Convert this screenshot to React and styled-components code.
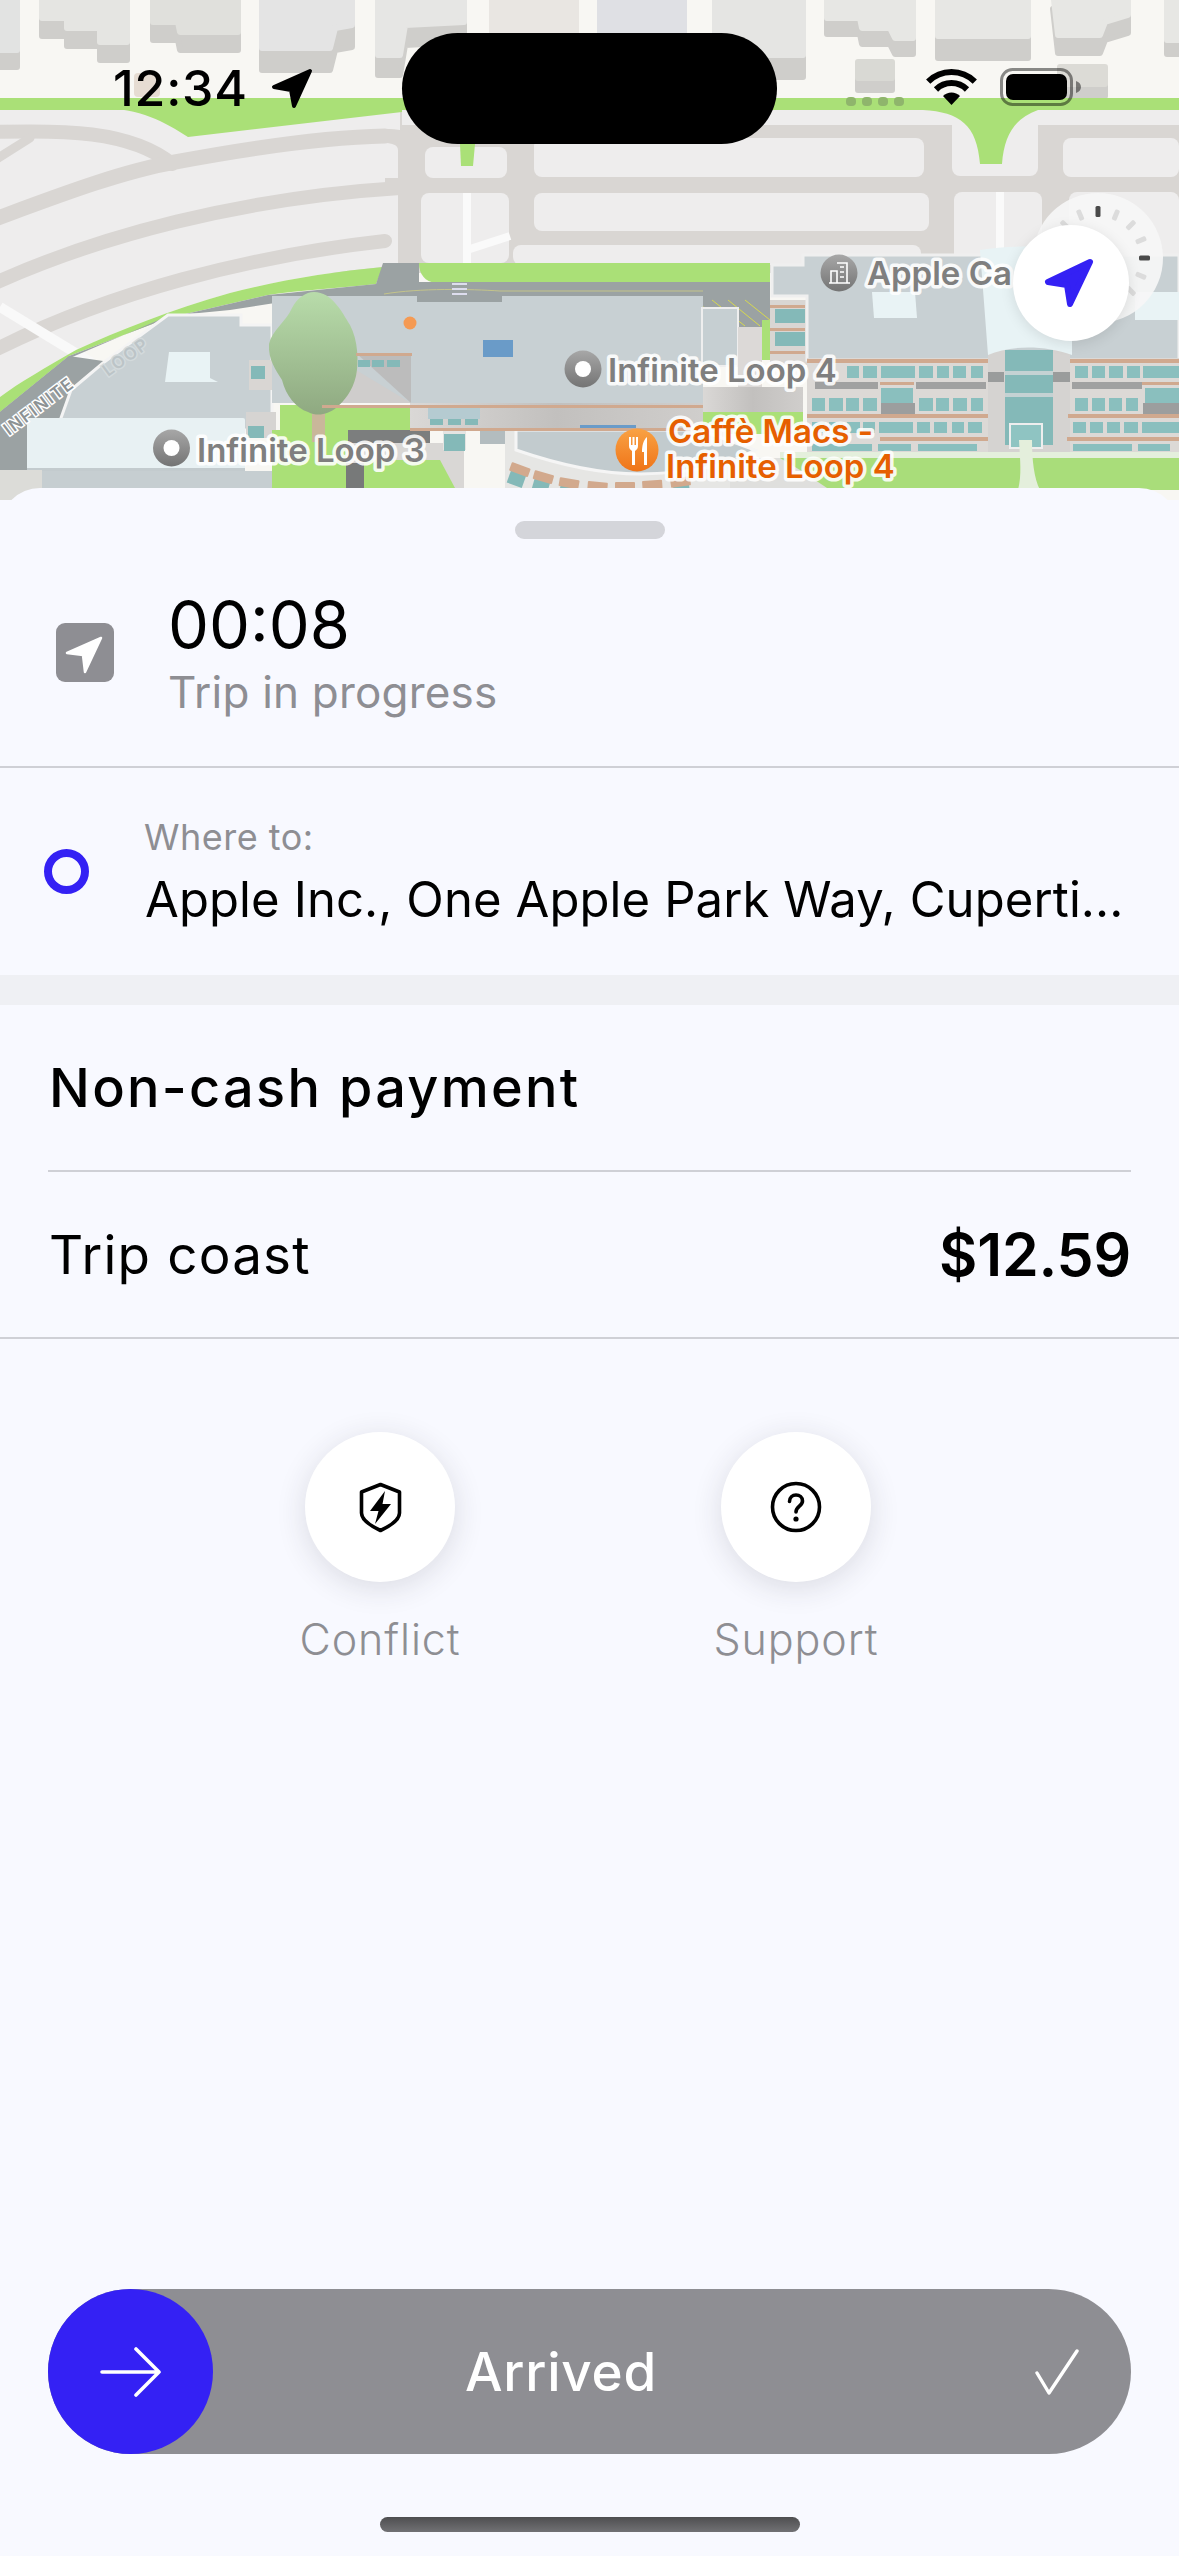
import styled, { createGlobalStyle } from "styled-components";

const BLUE = "#3421f4";
const GRAY = "#8e8e93";
const FONT = `Inter, "Liberation Sans", sans-serif`;

const GlobalStyle = createGlobalStyle`
  html, body { margin: 0; padding: 0; background: #f8f9ff; }
  * { box-sizing: border-box; }
  body { font-family: ${FONT}; -webkit-font-smoothing: antialiased; }
`;

const Page = styled.div`
  width: 1179px;
  height: 2556px;
  display: flex;
  flex-direction: column;
  overflow: hidden;
  background: #f8f9ff;
`;

// map + things floating on it
const MapWrap = styled.div`
  position: relative;
  flex: 0 0 500px;
  height: 500px;
  overflow: hidden;
`;
const MapSvg = styled.svg`
  display: block;
  width: 1179px;
  height: 500px;
`;
const MapLabel = styled.text`
  font-family: ${FONT};
  font-size: 33px;
  font-weight: 600;
  fill: ${({ $orange }) => ($orange ? "#e65f00" : "#7f7f7f")};
  stroke: rgba(255, 255, 255, 0.88);
  stroke-width: 7px;
  stroke-linejoin: round;
  paint-order: stroke;
`;
const RoadName = styled.text`
  font-family: ${FONT};
  font-size: 17px;
  font-weight: 600;
  letter-spacing: 1.5px;
  fill: ${({ $faint }) => ($faint ? "#bcc4c7" : "#8c9294")};
  stroke: ${({ $faint }) => ($faint ? "#d3dadc" : "#fff")};
  stroke-width: 3px;
  paint-order: stroke;
`;

const StatusBar = styled.div`
  position: absolute;
  inset: 0 0 auto 0;
  height: 144px;
`;
const Clock = styled.div`
  position: absolute;
  left: 113px;
  top: 59px;
  font-size: 50px;
  line-height: 58px;
  font-weight: 500;
  letter-spacing: 0.8px;
  color: #000;
`;
const StatusIcon = styled.svg`
  position: absolute;
  left: ${({ $x }) => $x}px;
  top: ${({ $y }) => $y}px;
`;
const Island = styled.div`
  position: absolute;
  left: 402px;
  top: 33px;
  width: 375px;
  height: 111px;
  border-radius: 56px;
  background: #000;
`;
const CompassDial = styled.svg`
  position: absolute;
  left: 1033px;
  top: 192px;
`;
const LocateButton = styled.div`
  position: absolute;
  left: 1013px;
  top: 225px;
  width: 116px;
  height: 116px;
  border-radius: 50%;
  background: #fff;
  box-shadow: 0 3px 14px rgba(0, 0, 0, 0.1);
`;

// bottom sheet
const Sheet = styled.section`
  position: relative;
  flex: 1;
  margin-top: -12px;
  display: flex;
  flex-direction: column;
  background: #f8f9ff;
  border-radius: 40px 40px 0 0;
`;
const Handle = styled.div`
  align-self: center;
  width: 150px;
  height: 18px;
  margin-top: 33px;
  border-radius: 9px;
  background: #d4d5da;
`;
const TripRow = styled.div`
  height: 229px;
  display: flex;
  align-items: center;
  gap: 54px;
  padding-left: 56px;
  border-bottom: 2px solid #cfd0d6;
`;
const NavTile = styled.div`
  width: 58px;
  height: 59px;
  display: flex;
  border-radius: 9px;
  background: ${GRAY};
`;
const Stack = styled.div`
  display: flex;
  flex-direction: column;
`;
const Timer = styled.div`
  font-size: 65px;
  line-height: 78px;
  font-weight: 400;
  margin-top: -2px;
  color: #000;
`;
const TripStatus = styled.div`
  margin-top: 2px;
  font-size: 44px;
  line-height: 52px;
  letter-spacing: 0.2px;
  color: ${GRAY};
`;
const DestRow = styled.div`
  height: 207px;
  display: flex;
  align-items: center;
  gap: 56px;
  padding-left: 44px;
`;
const DestDot = styled.div`
  width: 45px;
  height: 45px;
  border-radius: 50%;
  border: 8px solid ${BLUE};
`;
const DestLabel = styled.div`
  font-size: 36px;
  line-height: 42px;
  letter-spacing: 0.5px;
  margin: 1px 0 0 -1px;
  color: ${GRAY};
`;
const DestValue = styled.div`
  margin-top: 13px;
  font-size: 49px;
  line-height: 58px;
  letter-spacing: 0.1px;
  color: #000;
  white-space: nowrap;
`;
const Band = styled.div`
  height: 30px;
  background: #eff0f4;
`;
const PayTitleRow = styled.div`
  height: 167px;
  margin: 0 48px;
  display: flex;
  align-items: center;
  border-bottom: 2px solid #cfd0d6;
`;
const PayTitle = styled.div`
  font-size: 54px;
  font-weight: 500;
  letter-spacing: 2.3px;
  margin-left: 1px;
  color: #000;
`;
const CostRow = styled.div`
  height: 167px;
  padding: 0 48px;
  display: flex;
  align-items: center;
  justify-content: space-between;
  border-bottom: 2px solid #cfd0d6;
`;
const CostLabel = styled.div`
  font-size: 53px;
  letter-spacing: 1.2px;
  margin-left: 1px;
  color: #000;
`;
const CostValue = styled.div`
  font-size: 59px;
  font-weight: 600;
  letter-spacing: -0.2px;
  color: #000;
`;
const Actions = styled.div`
  margin-top: 93px;
  padding-right: 3px;
  display: flex;
  justify-content: center;
  gap: 216px;
`;
const Action = styled.div`
  width: 200px;
  display: flex;
  flex-direction: column;
  align-items: center;
`;
const ActionCircle = styled.div`
  width: 150px;
  height: 150px;
  display: flex;
  align-items: center;
  justify-content: center;
  border-radius: 50%;
  background: #fff;
  box-shadow: 0 6px 30px rgba(40, 40, 60, 0.14);
`;
const ActionLabel = styled.div`
  margin-top: 32px;
  font-size: 43px;
  line-height: 50px;
  font-weight: 300;
  letter-spacing: 0.9px;
  color: ${GRAY};
`;
const Slider = styled.div`
  margin: auto 48px 0;
  height: 165px;
  display: flex;
  align-items: center;
  border-radius: 83px;
  background: ${GRAY};
`;
const Knob = styled.div`
  width: 165px;
  height: 165px;
  flex: none;
  display: flex;
  align-items: center;
  justify-content: center;
  border-radius: 50%;
  background: ${BLUE};
`;
const SliderText = styled.div`
  flex: 1;
  text-align: center;
  padding-right: 126px;
  font-size: 53px;
  font-weight: 500;
  letter-spacing: 0.8px;
  color: #fff;
`;
const SliderCheck = styled.svg`
  flex: none;
  margin-right: 52px;
`;
const HomeBar = styled.div`
  align-self: center;
  width: 420px;
  height: 15px;
  margin: 63px 0 24px;
  border-radius: 8px;
  background: linear-gradient(#4e4e50, #717174);
`;

// rooftops along the top edge: [points of the top face, depth of the side wall]
const topBlocks = [
  ["-10,-9 17,-9 17,50 -10,50", 17, "#e2e3e2"],
  ["42,-9 127,-9 127,42 100,42 100,28 67,28 67,18 42,18", 18, "#e5e5e2"],
  ["153,-9 238,-9 238,32 180,32 178,22 153,22", 18, "#e0e0dc"],
  ["262,-9 352,-9 352,25 335,28 330,48 262,48", 22, "#e4e4e4"],
  ["378,-9 464,-9 464,22 405,25 400,55 378,55", 20, "#e6e6e4"],
  ["492,-9 576,-9 576,40 492,40", 10, "#e9e6e2"],
  ["600,-9 684,-9 684,40 600,40", 10, "#dfe0e4"],
  ["715,-9 803,-9 803,55 715,55", 22, "#e5e5e3"],
  ["827,-9 913,-9 913,38 895,38 890,28 862,28 860,18 827,18", 16, "#e7e7e4"],
  ["938,-9 1028,-9 1028,36 938,36", 22, "#e7e7e4"],
  ["1053,-9 1128,-9 1128,15 1105,22 1100,35 1058,35", 18, "#e7e7e4"],
  ["1167,-9 1190,-9 1190,40 1167,40", 14, "#e7e7e4"],
  ["858,62 892,62 892,78 858,78", 12, "#d9d9d4"],
  ["1060,67 1105,67 1105,84 1060,84", 12, "#dcdbd6"],
];

const lightBlocks = [
  [425, 147, 82, 31],
  [534, 138, 390, 39],
  [421, 193, 88, 70],
  [534, 193, 395, 38],
  [513, 245, 408, 20],
  [954, 192, 88, 70],
  [952, 110, 86, 66],
  [1063, 138, 116, 39],
  [1069, 192, 110, 70],
];

const facadeRows = [
  [366, 12, [[847, 859], [863, 877], [881, 915], [919, 933], [937, 949], [953, 966], [971, 983], [1075, 1088], [1092, 1105], [1109, 1123], [1127, 1140], [1143, 1179]]],
  [398, 13, [[812, 825], [829, 843], [846, 859], [863, 877], [919, 933], [936, 949], [953, 967], [971, 983], [1075, 1088], [1092, 1105], [1109, 1122], [1126, 1138]]],
  [388, 15, [[881, 913], [1145, 1179]]],
  [422, 11, [[812, 825], [829, 843], [847, 860], [863, 875], [879, 913], [917, 930], [934, 947], [952, 964], [968, 982], [1073, 1086], [1090, 1103], [1107, 1120], [1124, 1138], [1142, 1179]]],
  [444, 7, [[812, 872], [878, 911], [918, 977], [1073, 1132], [1138, 1170]]],
];

const peachBars = [
  [807, 359, 181, 4], [1070, 359, 109, 4],
  [880, 382, 34, 3], [1100, 382, 79, 3],
  [807, 414, 181, 4], [1068, 414, 111, 4],
  [880, 437, 108, 4], [1067, 437, 112, 4],
  [770, 305, 35, 3], [770, 328, 35, 3], [770, 351, 35, 3],
  [322, 405, 381, 3], [410, 428, 293, 3], [356, 353, 56, 3],
];

// cafe awnings: [x, y, tilt]
const awnings = [
  [512, 462, 20], [535, 470, 16], [560, 477, 10], [588, 481, 5],
  [615, 482, 0], [642, 481, -4], [670, 479, -8],
];

const dialTicks = Array.from({ length: 16 }, (_, i) => i * 22.5);

function CityMap() {
  return (
    <MapSvg viewBox="0 0 1179 500">
      <defs>
        <linearGradient id="tree" x1="0" y1="0" x2="0" y2="1">
          <stop offset="0" stopColor="#b8dcaa" />
          <stop offset="1" stopColor="#8fa981" />
        </linearGradient>
        <linearGradient id="ledge" x1="0" y1="0" x2="1" y2="0">
          <stop offset="0" stopColor="#dad8d6" />
          <stop offset="0.5" stopColor="#c2c0be" />
          <stop offset="1" stopColor="#d0cecc" />
        </linearGradient>
        <linearGradient id="pin" x1="0" y1="0" x2="0" y2="1">
          <stop offset="0" stopColor="#a7a7a7" />
          <stop offset="1" stopColor="#747474" />
        </linearGradient>
        <linearGradient id="pinOrange" x1="0" y1="0" x2="0" y2="1">
          <stop offset="0" stopColor="#f9a244" />
          <stop offset="1" stopColor="#ef7418" />
        </linearGradient>
      </defs>

      <rect width="1179" height="500" fill="#f8f7f3" />
      {topBlocks.map(([points, depth, top], i) => (
        <g key={i} strokeLinejoin="round" strokeWidth="6">
          <polygon points={points} fill="#cfcecb" stroke="#cfcecb" transform={`translate(0 ${depth})`} />
          <polygon points={points} fill={top} stroke={top} />
        </g>
      ))}
      <rect x="134" y="73" width="26" height="24" rx="4" fill="#e6dcd2" />

      {/* streets */}
      <rect y="98" width="1179" height="175" fill="#d9d6d3" />
      <rect x="402" y="110" width="777" height="15" fill="#eeeded" />
      <path d="M0 397V110H400V267H383C330 272 280 280 230 293C170 310 120 330 76 350C45 368 20 382 0 397Z" fill="#eeeded" />
      <g fill="none" stroke="#d9d6d3" strokeLinecap="round">
        <path d="M-5 132C60 130 130 130 172 164" strokeWidth="14" />
        <path d="M-5 160L30 138" strokeWidth="9" />
        <path d="M-5 219C60 195 120 172 175 162C250 148 330 137 385 136" strokeWidth="15" />
        <path d="M-5 283C100 236 240 198 400 188" strokeWidth="14" />
        <path d="M-5 350C110 292 250 256 385 241" strokeWidth="14" />
      </g>
      <path d="M0 307L92 363" stroke="#f9f9f9" strokeWidth="10" />
      <path d="M385 129C410 129 423 135 423 150V265H398V150C398 145 392 143 385 143Z" fill="#d9d6d3" />
      <rect x="385" y="178" width="794" height="14" fill="#d9d6d3" />

      {lightBlocks.map(([x, y, w, h], i) => (
        <rect key={i} x={x} y={y} width={w} height={h} rx="8" fill="#eeeded" />
      ))}
      <path d="M467 193V284M467 250L510 236" stroke="#fafafa" strokeWidth="8" fill="none" />
      <path d="M1000 192V262" stroke="#fafafa" strokeWidth="8" />

      {/* grass */}
      <rect y="98" width="1179" height="12" fill="#aae077" />
      <path d="M0 108H100C140 108 165 122 188 137L402 112V98H0Z" fill="#aae077" />
      <path d="M923 110C960 112 977 125 980 164H1002C1004 135 1015 118 1038 110Z" fill="#aae077" />
      <path d="M460 144H475L473 166H461Z" fill="#aae077" />
      <path d="M0 397C20 382 45 368 76 350C120 330 170 310 230 293C280 280 330 272 383 267L376 284C340 288 300 290 268 295L168 318L69 356L0 412Z" fill="#aae077" />
      <path d="M419 263H770V283H436C425 282 419 274 419 263Z" fill="#aae077" />

      {/* road under the campus */}
      <path d="M383 263H419V282H770V330H700V296H320L230 310L168 316L70 358L30 430L0 440V412L69 356L168 318L268 295L376 284Z" fill="#9ba2a3" />
      <path d="M0 412L69 356L110 362L61 420L25 488H0Z" fill="#9ba2a3" />
      <path d="M700 300H770V326H700Z" fill="#9ba2a3" />
      <path d="M712 300L745 326M728 300L760 326M745 300L770 320M700 304L725 326" stroke="#d7d94e" strokeWidth="1" />
      <path d="M384 294C420 288 470 289 500 291H703" stroke="#c4c48a" fill="none" />
      <rect x="452" y="283" width="15" height="2" fill="#dde" />
      <rect x="452" y="288" width="15" height="2" fill="#dde" />
      <rect x="452" y="293" width="15" height="2" fill="#dde" />

      {/* left building */}
      <path d="M168 315H241V325H272V430H232V488H40L61 418L71 390L103 363Z" fill="#c8d0d3" stroke="#f4f4f4" strokeWidth="3" />
      <path d="M169 352H210L210 378L218 382H165Z" fill="#e9f3f5" />
      <rect x="249" y="360" width="24" height="30" fill="#d9d6d3" />
      <rect x="251" y="366" width="14" height="13" fill="#84b9b8" />
      <rect x="246" y="412" width="30" height="26" fill="#d6d4d2" />
      <rect x="248" y="426" width="16" height="12" fill="#84b9b8" />
      <rect x="27" y="418" width="218" height="52" rx="2" fill="#e8f1f3" />
      <rect x="27" y="468" width="218" height="3" fill="#c3cbce" />
      <rect x="42" y="471" width="295" height="20" fill="#c6ced1" />
      <rect x="0" y="470" width="42" height="30" fill="#dcdcd8" />

      {/* main building */}
      <rect x="272" y="296" width="431" height="107" fill="#c8d0d3" />
      <rect x="417" y="296" width="85" height="6" fill="#9ba2a3" />
      <rect x="483" y="340" width="30" height="17" fill="#6a9bc8" />
      <circle cx="410" cy="323" r="6.5" fill="#f59a53" />
      <path d="M356 353H411V403Z" fill="#bcbcbc" />
      <path d="M356 370L411 403H340Z" fill="#cfcdcc" />
      <rect x="358" y="360" width="12" height="7" fill="#84b9b8" />
      <rect x="372" y="360" width="12" height="7" fill="#84b9b8" />
      <rect x="387" y="360" width="13" height="7" fill="#84b9b8" />
      <rect x="280" y="405" width="130" height="25" fill="#aae077" />
      <rect x="410" y="403" width="293" height="27" fill="url(#ledge)" />
      <rect x="428" y="405" width="52" height="14" fill="#b5cbd1" />
      <rect x="430" y="419" width="13" height="6" fill="#84b9b8" />
      <rect x="448" y="419" width="13" height="6" fill="#84b9b8" />
      <rect x="465" y="419" width="13" height="6" fill="#84b9b8" />
      <rect x="702" y="308" width="36" height="58" fill="#c6cfd2" stroke="#eee" strokeWidth="2" />
      <rect x="738" y="327" width="24" height="60" fill="#dcd9d7" />
      <rect x="762" y="320" width="8" height="40" fill="#aae077" />
      <rect x="703" y="387" width="100" height="26" fill="url(#ledge)" />
      <rect x="703" y="412" width="100" height="22" fill="#aae077" />
      <rect x="348" y="430" width="82" height="13" fill="#7c7e7e" />
      <rect x="272" y="430" width="76" height="58" fill="#aae077" />
      <rect x="346" y="443" width="118" height="45" fill="#d9d7d5" />
      <rect x="346" y="463" width="18" height="25" fill="#777979" />
      <path d="M364 460H440L455 488H364Z" fill="#aae077" />
      <rect x="443" y="430" width="23" height="20" fill="#e4e4e2" />
      <rect x="444" y="434" width="21" height="17" fill="#84b9b8" />
      <rect x="480" y="430" width="35" height="14" fill="#b3bcbf" />

      {/* cafe */}
      <path d="M505 430H730V488H505Z" fill="#e6e6e4" />
      <path d="M516 430H700L755 450C720 470 680 473 640 474C590 474 545 460 516 450Z" fill="#c2cbce" stroke="#f5f5f5" strokeWidth="3" />
      <rect x="580" y="425" width="56" height="6" fill="#6a9bc8" />
      {awnings.map(([x, y, tilt]) => (
        <g key={x} transform={`rotate(${tilt} ${x} ${y})`}>
          <rect x={x + 2} y={y + 7} width="16" height="14" fill="#84b9b8" />
          <rect x={x} y={y} width="20" height="9" rx="1" fill="#d2a98d" />
        </g>
      ))}

      {/* tree */}
      <rect x="312" y="412" width="13" height="30" fill="#c9b79a" />
      <path d="M314 292C332 292 342 312 350 325C358 340 359 362 356 376C352 392 345 400 336 408C328 414 318 417 308 412C296 408 286 396 282 380C276 370 268 360 269 344C272 330 286 322 292 308C297 298 306 292 314 292Z" fill="url(#tree)" />

      {/* apple campus */}
      <rect x="770" y="300" width="37" height="65" fill="#d9d6d3" />
      <rect x="775" y="309" width="30" height="14" fill="#84b9b8" />
      <rect x="775" y="332" width="30" height="14" fill="#84b9b8" />
      <path d="M772 265H803V255H1179V360H807V296H772Z" fill="#c8d0d3" stroke="#efefef" strokeWidth="3" />
      <path d="M872 292H915L917 318H874Z" fill="#e9f3f5" />
      <path d="M1135 292H1179V320H1135Z" fill="#e9f3f5" />
      <rect x="807" y="358" width="181" height="98" fill="#dcd9d6" />
      <rect x="1070" y="358" width="109" height="98" fill="#dcd9d6" />
      <rect x="988" y="350" width="82" height="104" fill="#d5d3d1" />
      <rect x="1005" y="350" width="48" height="95" fill="#84b9b8" />
      <rect x="1005" y="371" width="48" height="4" fill="#c4d2d3" />
      <rect x="1005" y="393" width="48" height="4" fill="#c4d2d3" />
      <rect x="1010" y="424" width="32" height="24" fill="#8fc4c2" stroke="#eee" strokeWidth="2" />
      <rect x="988" y="372" width="16" height="10" fill="#9a9c9c" />
      <rect x="1053" y="372" width="17" height="10" fill="#9a9c9c" />
      {facadeRows.map(([y, h, cols]) =>
        cols.map(([x1, x2]) => (
          <rect key={`${y}-${x1}`} x={x1} y={y} width={x2 - x1} height={h} fill="#8abfbe" />
        ))
      )}
      {peachBars.map(([x, y, w, h], i) => (
        <rect key={i} x={x} y={y} width={w} height={h} fill="#d0a98f" />
      ))}
      <rect x="881" y="403" width="34" height="11" fill="#9c9e9e" />
      <rect x="1143" y="403" width="36" height="11" fill="#9c9e9e" />
      <rect x="815" y="382" width="63" height="7" fill="#a0a1a1" />
      <rect x="916" y="382" width="70" height="7" fill="#a0a1a1" />
      <rect x="1072" y="382" width="70" height="7" fill="#a0a1a1" />
      <path d="M980 250C1010 245 1050 246 1072 250V355C1045 345 1010 345 988 355Z" fill="#e8f3f5" />
      <path d="M780 452H1179V458H780Z" fill="#e4efdc" />
      <path d="M760 458H1179V490H760Z" fill="#a9dd7a" />
      <path d="M1019 440H1032C1032 460 1034 478 1040 490H1018C1022 475 1020 460 1019 440Z" fill="#e4efdc" />
      <path d="M730 458H780L800 470L830 490H730Z" fill="#dfdfdd" />

      {/* road names */}
      <RoadName x="0" y="0" transform="translate(9 436) rotate(-37)">INFINITE</RoadName>
      <RoadName $faint x="0" y="0" transform="translate(108 377) rotate(-36)">LOOP</RoadName>

      {/* pins and labels */}
      <circle cx="171.5" cy="448" r="18.5" fill="url(#pin)" />
      <circle cx="171.5" cy="448" r="8" fill="#fff" />
      <MapLabel x="197" y="462">Infinite Loop 3</MapLabel>

      <circle cx="583" cy="369" r="18.5" fill="url(#pin)" />
      <circle cx="583" cy="369" r="8" fill="#fff" />
      <MapLabel x="608" y="382">Infinite Loop 4</MapLabel>

      <circle cx="839" cy="273" r="18.5" fill="url(#pin)" />
      <path d="M829 283H850M831 283V271H837V283M837 263H847V283M840 267H844M840 272H844M840 277H844" stroke="#fff" strokeWidth="1.6" fill="none" />
      <MapLabel x="867" y="285">Apple Ca</MapLabel>

      <circle cx="637" cy="450" r="21.5" fill="url(#pinOrange)" />
      <path d="M629 437V446C629 449 631 450 632 451V465H635V451C636 450 638 449 638 446V437H636V445H634.5V437H632.5V445H631V437ZM647 437C643 440 642 447 642 452H644V465H647Z" fill="#fff" />
      <MapLabel $orange x="668" y="443">Caffè Macs -</MapLabel>
      <MapLabel $orange x="666" y="478">Infinite Loop 4</MapLabel>
    </MapSvg>
  );
}

export default function App() {
  return (
    <Page>
      <GlobalStyle />
      <MapWrap>
        <CityMap />
        <StatusBar>
          <Clock>12:34</Clock>
          <StatusIcon $x={271} $y={68} width="42" height="41" viewBox="0 0 42 41">
            <path d="M39 3L3 19L20 22L23 38Z" fill="#000" stroke="#000" strokeWidth="4" strokeLinejoin="round" />
          </StatusIcon>
          <Island />
          <StatusIcon $x={846} $y={97} width="58" height="9" viewBox="0 0 58 9">
            {[0, 16, 32, 48].map((x) => (
              <rect key={x} x={x} width="10" height="9" rx="4" fill="#8fb56c" />
            ))}
          </StatusIcon>
          <StatusIcon $x={926} $y={69} width="51" height="36" viewBox="0 0 51 36">
            <path d="M25.5 36L17 27A12 12 0 0 1 34 27Z" fill="#000" />
            <path d="M10 20.5A22 22 0 0 1 41 20.5M2.2 12.7A33 33 0 0 1 48.8 12.7" stroke="#000" strokeWidth="6" fill="none" />
          </StatusIcon>
          <StatusIcon $x={1000} $y={68} width="82" height="38" viewBox="0 0 82 38">
            <rect x="1.5" y="1.5" width="70" height="35" rx="11" fill="none" stroke="#000" strokeOpacity="0.45" strokeWidth="3" />
            <rect x="6" y="6" width="61" height="26" rx="7" fill="#000" />
            <path d="M76 13C79 14 81 16 81 19C81 22 79 24 76 25Z" fill="#000" fillOpacity="0.45" />
          </StatusIcon>
        </StatusBar>
        <CompassDial width="130" height="132" viewBox="-65 -66 130 132">
          <circle r="65" fill="#f6f6f6" fillOpacity="0.92" />
          {dialTicks.map((deg) => (
            <rect
              key={deg}
              x="-2.5"
              y="-52"
              width="5"
              height="11"
              rx="1.5"
              fill={deg % 90 === 0 ? "#4a4a4a" : "#dcdcdc"}
              transform={`rotate(${deg})`}
            />
          ))}
        </CompassDial>
        <LocateButton>
          <svg width="116" height="116" viewBox="0 0 116 116">
            <path d="M77 37L35 57L54 60L57 79Z" fill={BLUE} stroke={BLUE} strokeWidth="6" strokeLinejoin="round" />
          </svg>
        </LocateButton>
      </MapWrap>

      <Sheet>
        <Handle />
        <TripRow>
          <NavTile>
            <svg width="58" height="59" viewBox="0 0 58 59">
              <path d="M45 15L11 30L27 32L29 49Z" fill="#fff" stroke="#fff" strokeWidth="2.5" strokeLinejoin="round" />
            </svg>
          </NavTile>
          <Stack>
            <Timer>00:08</Timer>
            <TripStatus>Trip in progress</TripStatus>
          </Stack>
        </TripRow>
        <DestRow>
          <DestDot />
          <Stack>
            <DestLabel>Where to:</DestLabel>
            <DestValue>Apple Inc., One Apple Park Way, Cuperti...</DestValue>
          </Stack>
        </DestRow>
        <Band />
        <PayTitleRow>
          <PayTitle>Non-cash payment</PayTitle>
        </PayTitleRow>
        <CostRow>
          <CostLabel>Trip coast</CostLabel>
          <CostValue>$12.59</CostValue>
        </CostRow>
        <Actions>
          <Action>
            <ActionCircle>
              <svg width="43" height="51" viewBox="0 0 43 51">
                <path d="M21.5 2.5L40.5 10V31C40.5 38 30 44.5 21.5 48.5C13 44.5 2.5 38 2.5 31V10Z" fill="none" stroke="#000" strokeWidth="3.6" strokeLinejoin="round" />
                <path d="M26 9L11 29H19.5L16 42L32 22H23.5Z" fill="#000" />
              </svg>
            </ActionCircle>
            <ActionLabel>Conflict</ActionLabel>
          </Action>
          <Action>
            <ActionCircle>
              <svg width="52" height="52" viewBox="0 0 52 52">
                <circle cx="26" cy="26" r="23.5" fill="none" stroke="#000" strokeWidth="3.6" />
                <path d="M19.5 20.5C19.5 16.5 22.5 14 26 14C29.5 14 32.5 16.5 32.5 20C32.5 25 26 25.5 26 31" fill="none" stroke="#000" strokeWidth="3.6" strokeLinecap="round" />
                <circle cx="26" cy="38" r="2.6" fill="#000" />
              </svg>
            </ActionCircle>
            <ActionLabel>Support</ActionLabel>
          </Action>
        </Actions>
        <Slider>
          <Knob>
            <svg width="62" height="50" viewBox="0 0 62 50">
              <path d="M2 25H59M36 2L59 25L36 48" fill="none" stroke="#fff" strokeWidth="3.6" strokeLinecap="round" strokeLinejoin="round" />
            </svg>
          </Knob>
          <SliderText>Arrived</SliderText>
          <SliderCheck width="44" height="46" viewBox="0 0 44 46">
            <path d="M2 24L14 44L42 2" fill="none" stroke="#fff" strokeWidth="3.4" strokeLinecap="round" strokeLinejoin="round" />
          </SliderCheck>
        </Slider>
        <HomeBar />
      </Sheet>
    </Page>
  );
}
